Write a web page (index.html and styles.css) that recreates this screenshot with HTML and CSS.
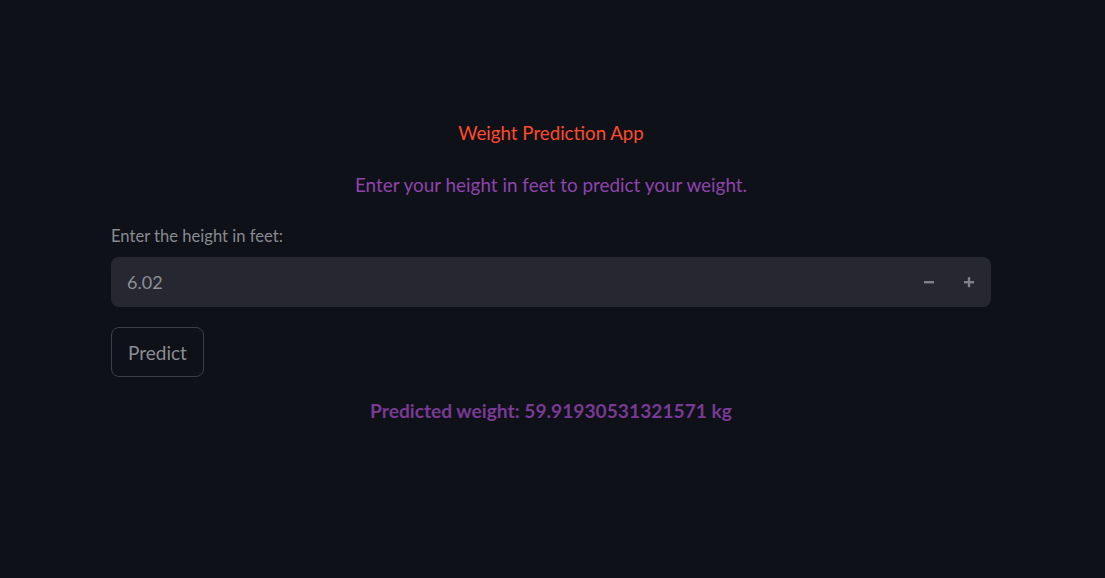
FILE: index.html
```html
<!DOCTYPE html>
<html>
<head>
<meta charset="utf-8">
<link rel="stylesheet" href="styles.css">
</head>
<body>
<main class="app">
  <div class="block">
    <p class="title">Weight Prediction App</p>
    <p class="subtitle">Enter your height in feet to predict your weight.</p>
    <div class="field">
      <label class="label">Enter the height in feet:</label>
      <div class="number-input">
        <span class="value">6.02</span>
        <div class="steps">
          <button class="step" aria-label="decrement">
            <svg width="12" height="12" viewBox="0 0 12 12"><rect x="1" y="5" width="10" height="2.4" fill="currentColor"/></svg>
          </button>
          <button class="step" aria-label="increment">
            <svg width="12" height="12" viewBox="0 0 12 12"><rect x="1" y="5" width="10" height="2.4" fill="currentColor"/><rect x="4.8" y="1.2" width="2.4" height="10" fill="currentColor"/></svg>
          </button>
        </div>
      </div>
    </div>
    <div class="actions">
      <button class="btn">Predict</button>
    </div>
    <p class="result">Predicted weight: 59.91930531321571 kg</p>
  </div>
</main>
</body>
</html>
```
FILE: styles.css
```css
* { box-sizing: border-box; }
html, body {
  margin: 0;
  padding: 0;
  background: #0e1117;
  height: 100%;
}
body {
  font-family: "Source Sans Pro", "Lato", "Liberation Sans", sans-serif;
  color: #fafafa;
}
.app {
  display: flex;
  justify-content: center;
  padding-top: 118px;
  padding-right: 3px;
}
.block {
  width: 880px;
  display: flex;
  flex-direction: column;
}
.title {
  margin: 0;
  text-align: center;
  color: #ff4b2b;
  font-size: 18.7px;
  line-height: 30px;
}
.subtitle {
  margin: 22px 0 0;
  text-align: center;
  color: #8e44ad;
  font-size: 18.9px;
  line-height: 30px;
}
.field {
  margin-top: 26px;
  display: flex;
  flex-direction: column;
}
.label {
  color: #878a90;
  font-size: 16.6px;
  line-height: 20px;
  margin-bottom: 11px;
}
.number-input {
  height: 50px;
  background: #262730;
  border-radius: 8px;
  display: flex;
  align-items: center;
  justify-content: space-between;
  padding-left: 16px;
}
.value {
  color: #8d9096;
  font-size: 18px;
}
.steps {
  display: flex;
  height: 100%;
  padding-right: 2px;
}
.step {
  width: 40px;
  height: 100%;
  border: none;
  background: transparent;
  color: #7f818a;
  display: flex;
  align-items: center;
  justify-content: center;
  padding: 0;
}
.actions {
  margin-top: 20px;
  display: flex;
}
.btn {
  height: 50px;
  padding: 0 16px;
  background: transparent;
  border: 1px solid #3b3e46;
  border-radius: 8px;
  color: #8a8d93;
  font-family: inherit;
  font-size: 19px;
}
.result {
  margin: 19px 0 0;
  text-align: center;
  color: #783a94;
  font-weight: 700;
  font-size: 19.2px;
  line-height: 30px;
}
```
